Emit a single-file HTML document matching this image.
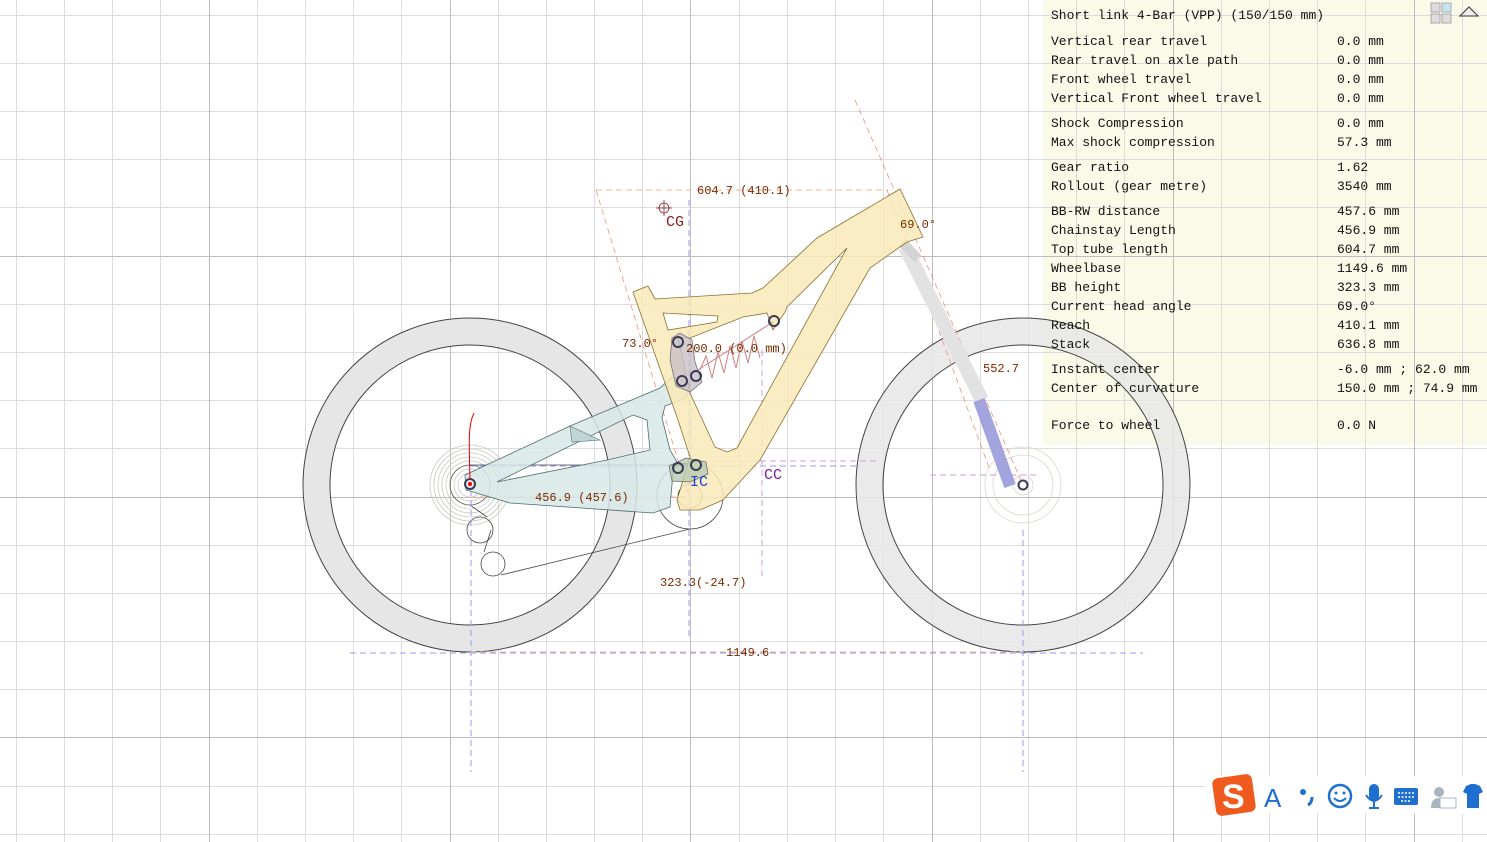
<!DOCTYPE html>
<html><head><meta charset="utf-8"><style>
html,body{margin:0;padding:0;background:#fff;width:1487px;height:842px;overflow:hidden}
svg{display:block}
.m{font-family:"Liberation Mono","Noto Sans CJK SC",monospace;font-size:13px;fill:#111}
.l{font-family:"Liberation Mono",monospace;font-size:12px;fill:#7a2a00}
</style></head><body>
<svg width="1487" height="842" viewBox="0 0 1487 842" xmlns="http://www.w3.org/2000/svg">
<rect x="1043" y="0" width="444" height="445" fill="#fafae9"/>
<g stroke="#dcdcdc" stroke-width="1">
<path d="M16.5 0V842M64.5 0V842M112.5 0V842M160.5 0V842M257.5 0V842M305.5 0V842M353.5 0V842M401.5 0V842M498.5 0V842M546.5 0V842M594.5 0V842M642.5 0V842M739.5 0V842M787.5 0V842M835.5 0V842M883.5 0V842M980.5 0V842M1028.5 0V842M1076.5 0V842M1124.5 0V842M1221.5 0V842M1269.5 0V842M1317.5 0V842M1365.5 0V842M1462.5 0V842"/>
<path d="M0 15.5H1487M0 63.5H1487M0 111.5H1487M0 159.5H1487M0 207.5H1487M0 304.5H1487M0 352.5H1487M0 400.5H1487M0 448.5H1487M0 545.5H1487M0 593.5H1487M0 641.5H1487M0 689.5H1487M0 786.5H1487M0 834.5H1487"/>
</g>
<g stroke="#bdbdbd" stroke-width="1">
<path d="M209.5 0V842M450.5 0V842M690.5 0V842M932.5 0V842M1173.5 0V842M1414.5 0V842M0 256.5H1487M0 497.5H1487M0 737.5H1487"/>
</g>
<!-- wheels -->
<g fill="none" stroke="#444" stroke-width="1">
<path fill="#e6e6e6" fill-rule="evenodd" d="M303 485a167 167 0 1 0 334 0a167 167 0 1 0 -334 0zM330 485a140 140 0 1 1 280 0a140 140 0 1 1 -280 0z"/>
<path fill="#e6e6e6" fill-opacity="0.85" fill-rule="evenodd" d="M856 485a167 167 0 1 0 334 0a167 167 0 1 0 -334 0zM883 485a140 140 0 1 1 280 0a140 140 0 1 1 -280 0z"/>
</g>
<!-- rear cassette -->
<g fill="none" stroke="#c8c8c0" stroke-width="0.8">
<circle cx="470" cy="485" r="40"/><circle cx="470" cy="485" r="36"/><circle cx="470" cy="485" r="32"/><circle cx="470" cy="485" r="28"/><circle cx="470" cy="485" r="24"/><circle cx="470" cy="485" r="20"/><circle cx="470" cy="485" r="16"/><circle cx="470" cy="485" r="12"/>
</g>
<circle cx="470" cy="485" r="20" fill="none" stroke="#555" stroke-width="0.8"/>
<!-- front rotor -->
<g fill="none" stroke="#d8d4c8" stroke-width="0.8"><circle cx="1023" cy="485" r="38"/><circle cx="1023" cy="485" r="30"/><circle cx="1023" cy="485" r="10"/></g>
<!-- chain -->
<g fill="none" stroke="#444" stroke-width="0.8">
<path d="M470 465L690 465"/>
<circle cx="480" cy="530" r="13"/><circle cx="493" cy="564" r="12"/>
<circle cx="690" cy="496" r="33"/><circle cx="690" cy="496" r="12"/>
<path d="M470 505L487 517M491 530L484 552M501 575L690 529"/>
</g>
<!-- dashed lines -->
<g fill="none" stroke-width="1" stroke-dasharray="6 4">
<path stroke="#9a9af0" d="M471 490V772M1023 530V772M350 653H1143M470 466H860M689 200V640"/>
<path stroke="#f0b890" d="M596 190H888M470 497H690M470 652H1023"/>
<path stroke="#c9a0d8" d="M762 350V580M690 461H880M930 475H1040"/>
<path stroke="#f08070" stroke-width="0.7" d="M596 190L690 500M855 100L1023 485M887 190L990 470"/>
</g>
<!-- fork -->
<path d="M905 247L982 400" stroke="#e2e2e2" stroke-width="14"/>
<path d="M979 400L1010 486" stroke="#a3a3de" stroke-width="12"/>
<path d="M902 242L918 259" stroke="#d4d4d4" stroke-width="10"/>
<!-- swingarm -->
<path fill="#d8e8e8" fill-opacity="0.85" fill-rule="evenodd" stroke="#4e6e6e" stroke-width="0.8" d="M465 475L570 426L660 388L672 377L690 384L686 398L665 406L662 418L670 450L677 462L673 473L670 507L653 513L510 503L466 490Z M497 482L633 415L647 420L650 450L607 460Z"/>
<path d="M570 426L600 440L572 442Z" fill="#c0d6d6" stroke="#4e6e6e" stroke-width="0.6"/>
<!-- frame -->
<path fill="#f9e9b8" fill-opacity="0.85" fill-rule="evenodd" stroke="#8a7030" stroke-width="0.8" d="M633 292L648 286L655 299L752 293L763 288L817 238L900 189L923 237L907 242L870 268L760 460L723 500L700 510L680 510L677 500L690 457L678 420Z M847 248L737 448L727 452L715 447L690 393L678 337L690 338L743 317L767 313L773 330L785 312L787 307Z M663 313L718 316L717 322L668 330Z"/>
<!-- shock -->
<path d="M690 375L773 322" stroke="#d08080" stroke-width="1"/>
<path d="M700 370L706 356L712 378L718 352L724 373L730 346L736 368L742 341L748 363L754 336L760 358" fill="none" stroke="#d08080" stroke-width="1"/>
<!-- links -->
<path d="M672 338L680 333L692 340L695 362L702 382L690 392L676 386L670 360Z" fill="#c8c0c8" fill-opacity="0.8" stroke="#666" stroke-width="0.7"/>
<path d="M669 466L686 458L706 462L708 474L690 482L672 481Z" fill="#b8ccb0" fill-opacity="0.8" stroke="#666" stroke-width="0.7"/>
<g fill="none" stroke="#3a3a55" stroke-width="2">
<circle cx="678" cy="342" r="5"/><circle cx="682" cy="381" r="5"/><circle cx="696" cy="376" r="5"/><circle cx="774" cy="321" r="5"/><circle cx="678" cy="468" r="5"/><circle cx="696" cy="465" r="5"/><circle cx="470" cy="484" r="5"/><circle cx="1023" cy="485" r="4.5"/>
</g>
<path d="M474 413C468 425 469 440 470 480" stroke="#e00" fill="none" stroke-width="1"/>
<circle cx="470" cy="484" r="2" fill="#e00"/>
<!-- CG -->
<g stroke="#8b2020" fill="none" stroke-width="0.8"><circle cx="664" cy="208" r="5"/><path d="M656 208H672M664 200V216"/></g>
<text x="666" y="226" class="l" style="font-size:15px;fill:#8b1a1a">CG</text>
<text x="690" y="486" class="l" style="font-size:15px;fill:#2040e0">IC</text>
<text x="764" y="479" class="l" style="font-size:15px;fill:#8020a0">CC</text>
<text x="697" y="194" class="l">604.7 (410.1)</text>
<text x="900" y="228" class="l">69.0°</text>
<text x="622" y="347" class="l">73.0°</text>
<text x="686" y="352" class="l">200.0 (0.0 mm)</text>
<text x="983" y="372" class="l">552.7</text>
<text x="535" y="501" class="l">456.9 (457.6)</text>
<text x="660" y="586" class="l">323.3(-24.7)</text>
<text x="726" y="656" class="l">1149.6</text>
<!-- panel text -->
<g class="m">
<text x="1051" y="19">Short link 4-Bar (VPP) (150/150 mm)</text>
<text x="1051" y="45">Vertical rear travel</text><text x="1337" y="45">0.0 mm</text>
<text x="1051" y="64">Rear travel on axle path</text><text x="1337" y="64">0.0 mm</text>
<text x="1051" y="83">Front wheel travel</text><text x="1337" y="83">0.0 mm</text>
<text x="1051" y="102">Vertical Front wheel travel</text><text x="1337" y="102">0.0 mm</text>
<text x="1051" y="127">Shock Compression</text><text x="1337" y="127">0.0 mm</text>
<text x="1051" y="146">Max shock compression</text><text x="1337" y="146">57.3 mm</text>
<text x="1051" y="171">Gear ratio</text><text x="1337" y="171">1.62</text>
<text x="1051" y="190">Rollout (gear metre)</text><text x="1337" y="190">3540 mm</text>
<text x="1051" y="215">BB-RW distance</text><text x="1337" y="215">457.6 mm</text>
<text x="1051" y="234">Chainstay Length</text><text x="1337" y="234">456.9 mm</text>
<text x="1051" y="253">Top tube length</text><text x="1337" y="253">604.7 mm</text>
<text x="1051" y="272">Wheelbase</text><text x="1337" y="272">1149.6 mm</text>
<text x="1051" y="291">BB height</text><text x="1337" y="291">323.3 mm</text>
<text x="1051" y="310">Current head angle</text><text x="1337" y="310">69.0°</text>
<text x="1051" y="329">Reach</text><text x="1337" y="329">410.1 mm</text>
<text x="1051" y="348">Stack</text><text x="1337" y="348">636.8 mm</text>
<text x="1051" y="373">Instant center</text><text x="1337" y="373">-6.0 mm ; 62.0 mm</text>
<text x="1051" y="392">Center of curvature</text><text x="1337" y="392">150.0 mm ; 74.9 mm</text>
<text x="1051" y="429">Force to wheel</text><text x="1337" y="429">0.0 N</text>
</g>
<!-- panel icons -->
<g stroke="#999" stroke-width="0.8"><rect x="1431" y="3" width="9" height="9" fill="#ddd"/><rect x="1442" y="3" width="9" height="9" fill="#c8e4f4"/><rect x="1431" y="14" width="9" height="9" fill="#ddd"/><rect x="1442" y="14" width="9" height="9" fill="#ddd"/></g>
<path d="M1460 16L1469 7L1478 16Z" fill="#eee" stroke="#333"/>
<!-- IME toolbar -->
<rect x="1205" y="776" width="282" height="38" fill="#fff" fill-opacity="0.9"/>
<rect x="1214" y="776" width="40" height="38" rx="6" fill="#f05a1e" transform="rotate(-8 1234 795)"/>
<text x="1222" y="808" style="font-family:'Liberation Sans',sans-serif;font-size:34px;font-weight:bold;fill:#fff">S</text>
<text x="1264" y="807" style="font-family:'Liberation Sans',sans-serif;font-size:26px;fill:#1e6fd0">A</text>
<circle cx="1303" cy="792" r="3" fill="#1e6fd0"/><path d="M1312 797q0 6 -4 8" stroke="#1e6fd0" stroke-width="3" fill="none"/>
<circle cx="1340" cy="796" r="11" fill="none" stroke="#1e6fd0" stroke-width="2.5"/><circle cx="1336" cy="793" r="1.5" fill="#1e6fd0"/><circle cx="1344" cy="793" r="1.5" fill="#1e6fd0"/><path d="M1334 798q6 6 12 0" stroke="#1e6fd0" stroke-width="2" fill="none"/>
<rect x="1369" y="784" width="10" height="17" rx="5" fill="#1e6fd0"/><path d="M1366 795q8 12 16 0M1374 802V808M1369 808H1379" stroke="#1e6fd0" stroke-width="2" fill="none"/>
<rect x="1394" y="788" width="24" height="17" rx="2" fill="#1e6fd0"/><path d="M1398 793h16M1398 797h16M1401 801h10" stroke="#fff" stroke-width="1.5" stroke-dasharray="2 1.5"/>
<circle cx="1439" cy="792" r="5" fill="#aab4c0"/><path d="M1431 808q0-10 8-10q6 0 8 4v6Z" fill="#aab4c0"/><rect x="1440" y="798" width="16" height="10" fill="#fff" stroke="#aab4c0"/>
<path d="M1466 786l5-2h4l5 2l3 6l-4 2v14h-12v-14l-4-2z" fill="#1e6fd0"/>
</svg>
</body></html>
